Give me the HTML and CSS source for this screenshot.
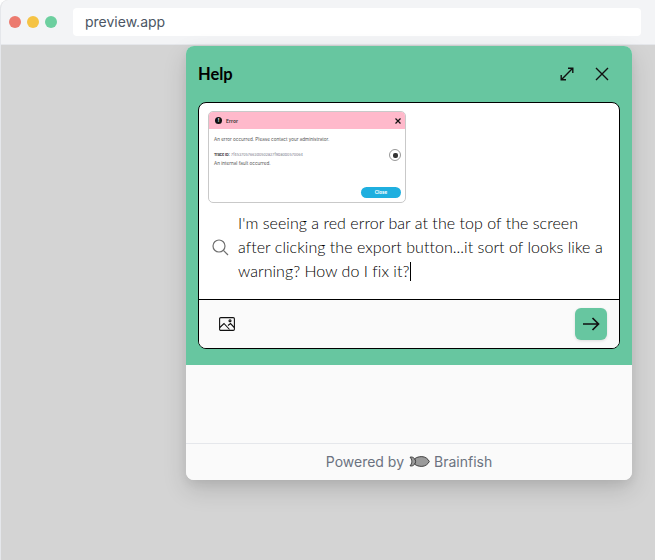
FILE: index.html
```html
<!DOCTYPE html>
<html lang="en">
<head>
<meta charset="utf-8">
<title>Help</title>
<link rel="stylesheet" href="styles.css">
</head>
<body>
<div class="window">
  <header class="chrome">
    <div class="lights"><span class="light red"></span><span class="light yellow"></span><span class="light green"></span></div>
    <div class="url">preview.app</div>
  </header>
  <main class="stage">
    <section class="panel">
      <div class="panel-top">
        <div class="panel-head">
          <h1 class="title">Help</h1>
          <div class="head-actions">
            <svg class="icon" viewBox="0 0 16 16" width="16" height="16" fill="none" stroke="#111" stroke-width="1.4"><path d="M2.800 13.200 13.200 2.800M9 2.200h4.800V7M2.200 9v4.800H7"/></svg>
            <svg class="icon" viewBox="0 0 16 16" width="16" height="16" fill="none" stroke="#111" stroke-width="1.4"><path d="M2 2l12 12M14 2 2 14"/></svg>
          </div>
        </div>
        <div class="card">
          <div class="card-body">
            <div class="shot">
              <div class="shot-head">
                <span class="shot-bang">!</span><span class="shot-title">Error</span>
                <svg class="shot-x" viewBox="0 0 6 6" width="6" height="6" fill="none" stroke="#111" stroke-width="1.2"><path d="M.5.5l5 5M5.500.5l-5 5"/></svg>
              </div>
              <div class="shot-body">
                <p class="shot-msg">An error occurred. Please contact your administrator.</p>
                <div class="shot-trace">
                  <div>
                    <p class="shot-id"><b>Trace ID:</b> 7f4537057663d0502a27f9ba0b0570064</p>
                    <p class="shot-msg">An internal fault occurred.</p>
                  </div>
                  <span class="shot-copy"><span class="shot-copy-dot"></span></span>
                </div>
                <div class="shot-foot"><span class="shot-close">Close</span></div>
              </div>
            </div>
            <div class="query">
              <svg class="search" viewBox="0 0 17 17" width="17" height="17" fill="none" stroke="#6f6f6f" stroke-width="1.2"><circle cx="7" cy="7" r="6"/><path d="M11.400 11.400 16 16"/></svg>
              <p class="query-text">I'm seeing a red error bar at the top of the screen after clicking the export button...it sort of looks like a warning? How do I fix it?<span class="caret"></span></p>
            </div>
          </div>
          <div class="card-foot">
            <svg class="pic" viewBox="0 0 16 14" width="16" height="14" fill="none" stroke="#111" stroke-width="1.100"><rect x=".6" y=".6" width="14.800" height="12.800" rx="1.200"/><path d="M.8 10.500 5 6.500l5.500 6M9 8.500l2.500-2 3.800 4"/><circle cx="11" cy="3.800" r="1"/></svg>
            <button class="send" type="button" aria-label="Send">
              <svg viewBox="0 0 18 14" width="18" height="14" fill="none" stroke="#111" stroke-width="1.700"><path d="M1 7h15.500M10.500 1l6 6-6 6"/></svg>
            </button>
          </div>
        </div>
      </div>
      <div class="panel-space"></div>
      <footer class="panel-foot">
        <span>Powered by</span>
        <svg class="fish" viewBox="0 0 21 11" width="21" height="11" stroke="#333" stroke-width=".9"><path fill="#9a9a9a" d="M1 1.200c1.800-.5 3.300 0 4.600 1.600C7.600 1.300 10 .6 12.800.6c3.400 0 6.200 2.200 7.500 4.900-1.300 2.700-4.100 4.900-7.500 4.900-2.800 0-5.200-.7-7.200-2.200C4.300 9.800 2.800 10.300 1 9.800c1.100-1 1.800-2.600 1.800-4.300S2.100 2.200 1 1.200Z"/><path fill="none" d="M5.600 2.800c.7.800 1 1.700 1 2.700s-.3 1.900-1 2.700"/></svg>
        <span>Brainfish</span>
      </footer>
    </section>
  </main>
</div>
</body>
</html>
```
FILE: styles.css
```css
* { box-sizing: border-box; }
html, body { margin: 0; padding: 0; height: 100%; }
body { background: #fff; font-family: "Inter", "Liberation Sans", sans-serif; overflow: hidden; }
p, h1 { margin: 0; }

.window { width: 655px; height: 560px; display: flex; flex-direction: column; background: #d4d4d4; border-left: 1px solid #e5e7eb; border-top-left-radius: 8px; overflow: hidden; }

.chrome { height: 45px; flex: none; display: flex; align-items: center; gap: 16px; padding: 0 14px 1px 8px; background: #f3f4f6; border-bottom: 1px solid #e5e7eb; }
.lights { display: flex; gap: 6px; }
.light { width: 12px; height: 12px; border-radius: 50%; }
.red { background: #ec7a6f; }
.yellow { background: #f5c344; }
.green { background: #6ccf9f; }
.url { flex: 1; height: 28px; padding-left: 12px; background: #fff; border-radius: 4px; color: #4b5563; font-size: 14px; line-height: 28px; }

.stage { flex: 1; padding: 1px 0 0 185px; }
.panel { width: 446px; height: 434px; display: flex; flex-direction: column; background: #fafafa; border-radius: 8px; overflow: hidden; box-shadow: 0 10px 25px rgba(0,0,0,.14), 0 4px 10px rgba(0,0,0,.06); }
.panel-top { flex: none; height: 319px; padding: 0 12px; background: #67c6a0; }
.panel-head { height: 56px; display: flex; align-items: center; justify-content: space-between; }
.title { font-family: "Lato", sans-serif; font-size: 16.500px; font-weight: 700; color: #000; }
.head-actions { display: flex; align-items: center; gap: 19px; padding: 0 10px 0 0; }
.icon { display: block; }

.card { height: 247px; display: flex; flex-direction: column; background: #fff; border: 1px solid #000; border-radius: 8px; overflow: hidden; }
.card-body { height: 197px; flex: none; padding: 8px 9px 0; border-bottom: 1px solid #000; }

.shot { width: 198px; height: 92px; display: flex; flex-direction: column; background: #fff; border: 1px solid #c9c9c9; border-radius: 5px; overflow: hidden; }
.shot-head { height: 17px; flex: none; display: flex; align-items: center; gap: 4px; padding: 0 4px 0 6px; background: #ffb9cb; }
.shot-bang { width: 7px; height: 7px; border-radius: 50%; background: #111; color: #fff; font-size: 5px; font-weight: 700; line-height: 7px; text-align: center; }
.shot-title { flex: 1; font-size: 5px; font-weight: 600; color: #333; }
.shot-x { display: block; }
.shot-body { flex: 1; display: flex; flex-direction: column; padding: 8px 4px 4px 5px; }
.shot-msg { font-size: 4.600px; line-height: 6px; color: #555; }
.shot-trace { display: flex; align-items: flex-start; justify-content: space-between; margin-top: 6px; }
.shot-id { margin: 3px 0 3px; font-size: 3.700px; line-height: 6px; color: #778; }
.shot-id b { color: #333; }
.shot-copy { width: 12px; height: 12px; display: flex; align-items: center; justify-content: center; border: 1px solid #999; border-radius: 50%; }
.shot-copy-dot { width: 5px; height: 5px; border-radius: 2px; background: #333; }
.shot-foot { margin-top: auto; display: flex; justify-content: flex-end; }
.shot-close { width: 40px; height: 11px; border-radius: 6px; background: #1fafdf; color: #fff; font-size: 4.500px; font-weight: 700; line-height: 11px; text-align: center; }

.query { display: flex; align-items: center; gap: 9px; margin-top: 8px; padding-left: 4px; }
.search { flex: none; display: block; }
.query-text { width: 372px; font-family: "Lato", sans-serif; font-size: 16px; font-weight: 300; letter-spacing: .04px; line-height: 24px; color: #000; }
.caret { display: inline-block; width: 1px; height: 19px; margin-left: 1px; vertical-align: -4px; background: #000; }

.card-foot { flex: 1; display: flex; align-items: center; justify-content: space-between; padding: 0 12px 0 20px; background: #fafafa; }
.pic { display: block; }
.send { width: 32px; height: 32px; display: flex; align-items: center; justify-content: center; padding: 0; background: #67c6a0; border: 0; border-radius: 6px; box-shadow: 0 1px 3px rgba(0,0,0,.12); }

.panel-space { flex: 1; }
.panel-foot { height: 37px; flex: none; display: flex; align-items: center; justify-content: center; gap: 4.500px; padding-bottom: 2px; background: #fafafa; border-top: 1px solid #e5e7eb; color: #6b7280; font-size: 14px; }
.fish { display: block; }
```
